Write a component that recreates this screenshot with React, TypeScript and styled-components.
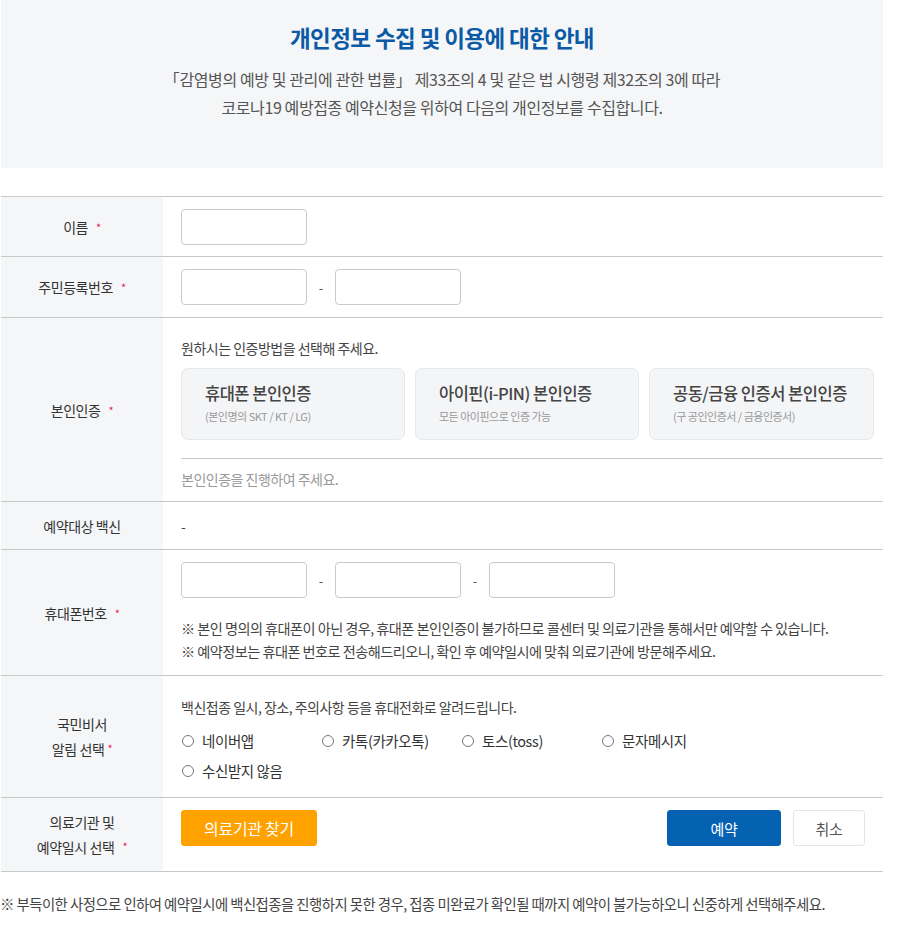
import styled, { createGlobalStyle } from "styled-components";

const GlobalStyle = createGlobalStyle`
  body {
    margin: 0;
    background: #fff;
    font-family: "Noto Sans CJK KR", "Noto Sans", sans-serif;
    color: #333;
  }
`;

const Page = styled.div`
  width: 882px;
  padding-left: 1px;
`;

const Intro = styled.section`
  background: #f4f6f8;
  height: 168px;
  box-sizing: border-box;
  padding-top: 21px;
  text-align: center;
`;

const Title = styled.h1`
  margin: 0;
  font-size: 22.5px;
  font-weight: 700;
  color: #0b5aa6;
  letter-spacing: -0.6px;
  line-height: 32px;
`;

const Desc = styled.p`
  margin: 12px 0 0;
  font-size: 16px;
  line-height: 28px;
  color: #555;
  letter-spacing: -0.4px;
`;

const Table = styled.div`
  margin-top: 28px;
  border-top: 1px solid #c8c8c8;
`;

const Row = styled.div<{ $h: number }>`
  display: grid;
  grid-template-columns: 162px 1fr;
  min-height: ${(p) => p.$h}px;
  border-bottom: 1px solid #c8c8c8;
  box-sizing: border-box;
`;

const Label = styled.div`
  background: #f5f6f7;
  display: flex;
  align-items: center;
  justify-content: center;
  text-align: center;
  font-size: 14px;
  line-height: 24px;
  color: #333;
  letter-spacing: -0.4px;
`;

const Star = styled.span`
  color: #e0245e;
  font-size: 11px;
  margin-left: 8px;
  vertical-align: 2px;
`;

const Cell = styled.div<{ $pad?: string }>`
  padding: ${(p) => p.$pad || "0 0 0 18px"};
  display: flex;
  flex-direction: column;
  justify-content: ${(p) => (p.$pad ? "flex-start" : "center")};
`;

const InputLine = styled.div`
  display: flex;
  align-items: center;
`;

const Input = styled.input`
  width: 126px;
  height: 36px;
  box-sizing: border-box;
  border: 1px solid #c9cbce;
  border-radius: 4px;
  background: #fff;
  outline: none;
`;

const Dash = styled.span`
  width: 28px;
  text-align: center;
  font-size: 13px;
  color: #555;
`;

const Guide = styled.div<{ $muted?: boolean }>`
  font-size: 14px;
  color: ${(p) => (p.$muted ? "#999" : "#444")};
  letter-spacing: -0.5px;
  line-height: 22px;
`;

const Cards = styled.div`
  display: grid;
  grid-template-columns: 224px 224px 225px;
  gap: 10px;
  margin-top: 9px;
`;

const Card = styled.button`
  height: 72px;
  box-sizing: border-box;
  border: 1px solid #e6e8eb;
  border-radius: 7px;
  background: #f4f5f7;
  text-align: left;
  padding: 11px 0 0 23px;
  font-family: inherit;
  cursor: pointer;
  display: flex;
  flex-direction: column;
  justify-content: flex-start;
`;

const CardTitle = styled.span`
  font-size: 16.5px;
  font-weight: 500;
  color: #444;
  letter-spacing: -0.5px;
  line-height: 27px;
`;

const CardSub = styled.span`
  font-size: 11px;
  color: #999;
  letter-spacing: -0.5px;
  line-height: 18px;
`;

const Divider = styled.div`
  border-top: 1px solid #c8c8c8;
  margin-top: 18px;
  padding: 9px 0 11px;
`;

const Note = styled.div`
  font-size: 14.2px;
  color: #444;
  letter-spacing: -0.55px;
  line-height: 23px;
`;

const Radios = styled.div`
  display: grid;
  grid-template-columns: repeat(4, 140px);
  row-gap: 8px;
  margin-top: 12px;
`;

const RadioItem = styled.label`
  display: flex;
  align-items: center;
  font-size: 14.5px;
  color: #333;
  letter-spacing: -0.4px;
  line-height: 22px;
`;

const Circle = styled.span`
  width: 10px;
  height: 10px;
  border: 1px solid #777;
  border-radius: 50%;
  margin-right: 8px;
  margin-left: 1px;
`;

const Actions = styled.div`
  display: flex;
  align-items: flex-start;
  padding: 12px 18px 0 18px;
`;

const Button = styled.button<{ $variant: "orange" | "blue" | "plain" }>`
  height: 36px;
  border-radius: 3px;
  font-family: inherit;
  font-size: ${(p) => (p.$variant === "orange" ? "16px" : "15px")};
  letter-spacing: -0.3px;
  cursor: pointer;
  border: 1px solid
    ${(p) =>
      p.$variant === "orange"
        ? "#ffa200"
        : p.$variant === "blue"
        ? "#0562b3"
        : "#e3e5e8"};
  background: ${(p) =>
    p.$variant === "orange"
      ? "#ffa200"
      : p.$variant === "blue"
      ? "#0562b3"
      : "#fff"};
  color: ${(p) => (p.$variant === "plain" ? "#555" : "#fff")};
  width: ${(p) =>
    p.$variant === "orange" ? "136px" : p.$variant === "blue" ? "114px" : "72px"};
`;

const Spacer = styled.div`
  flex: 1;
`;

const Gap = styled.div<{ $w?: number; $h?: number }>`
  flex: none;
  width: ${(p) => p.$w || 0}px;
  height: ${(p) => p.$h || 0}px;
`;

const Footer = styled.p`
  margin: 21px 0 0 -1px;
  font-size: 14.4px;
  color: #444;
  letter-spacing: -0.55px;
`;

function Req() {
  return <Star>*</Star>;
}

const alarms = ["네이버앱", "카톡(카카오톡)", "토스(toss)", "문자메시지", "수신받지 않음"];

export default function App() {
  return (
    <Page>
      <GlobalStyle />
      <Intro>
        <Title>개인정보 수집 및 이용에 대한 안내</Title>
        <Desc>
          「감염병의 예방 및 관리에 관한 법률」 제33조의 4 및 같은 법 시행령 제32조의 3에 따라
          <br />
          코로나19 예방접종 예약신청을 위하여 다음의 개인정보를 수집합니다.
        </Desc>
      </Intro>

      <Table>
        <Row $h={60}>
          <Label>
            이름
            <Req />
          </Label>
          <Cell>
            <InputLine>
              <Input />
            </InputLine>
          </Cell>
        </Row>

        <Row $h={61}>
          <Label>
            주민등록번호
            <Req />
          </Label>
          <Cell>
            <InputLine>
              <Input />
              <Dash>-</Dash>
              <Input />
            </InputLine>
          </Cell>
        </Row>

        <Row $h={184}>
          <Label>
            본인인증
            <Req />
          </Label>
          <Cell $pad="19px 0 0 18px">
            <Guide>원하시는 인증방법을 선택해 주세요.</Guide>
            <Cards>
              <Card>
                <CardTitle>휴대폰 본인인증</CardTitle>
                <CardSub>(본인명의 SKT / KT / LG)</CardSub>
              </Card>
              <Card>
                <CardTitle>아이핀(i-PIN) 본인인증</CardTitle>
                <CardSub>모든 아이핀으로 인증 가능</CardSub>
              </Card>
              <Card>
                <CardTitle>공동/금융 인증서 본인인증</CardTitle>
                <CardSub>(구 공인인증서 / 금융인증서)</CardSub>
              </Card>
            </Cards>
            <Divider>
              <Guide $muted>본인인증을 진행하여 주세요.</Guide>
            </Divider>
          </Cell>
        </Row>

        <Row $h={48}>
          <Label>예약대상 백신</Label>
          <Cell>
            <Guide>-</Guide>
          </Cell>
        </Row>

        <Row $h={126}>
          <Label>
            휴대폰번호
            <Req />
          </Label>
          <Cell $pad="12px 0 0 18px">
            <InputLine>
              <Input />
              <Dash>-</Dash>
              <Input />
              <Dash>-</Dash>
              <Input />
            </InputLine>
            <Gap $h={19} />
            <Note>
              ※ 본인 명의의 휴대폰이 아닌 경우, 휴대폰 본인인증이 불가하므로 콜센터 및 의료기관을 통해서만 예약할 수 있습니다.
            </Note>
            <Note>※ 예약정보는 휴대폰 번호로 전송해드리오니, 확인 후 예약일시에 맞춰 의료기관에 방문해주세요.</Note>
          </Cell>
        </Row>

        <Row $h={122}>
          <Label>
            <span>
              국민비서
              <br />
              알림 선택
              <Star style={{ marginLeft: 3 }}>*</Star>
            </span>
          </Label>
          <Cell $pad="20px 0 14px 18px">
            <Guide>백신접종 일시, 장소, 주의사항 등을 휴대전화로 알려드립니다.</Guide>
            <Radios>
              {alarms.map((t) => (
                <RadioItem key={t}>
                  <Circle />
                  {t}
                </RadioItem>
              ))}
            </Radios>
          </Cell>
        </Row>

        <Row $h={74}>
          <Label>
            <span>
              의료기관 및
              <br />
              예약일시 선택
              <Req />
            </span>
          </Label>
          <Actions>
            <Button $variant="orange">의료기관 찾기</Button>
            <Spacer />
            <Button $variant="blue">예약</Button>
            <Gap $w={12} />
            <Button $variant="plain">취소</Button>
          </Actions>
        </Row>
      </Table>

      <Footer>
        ※ 부득이한 사정으로 인하여 예약일시에 백신접종을 진행하지 못한 경우, 접종 미완료가 확인될 때까지 예약이 불가능하오니 신중하게 선택해주세요.
      </Footer>
    </Page>
  );
}
